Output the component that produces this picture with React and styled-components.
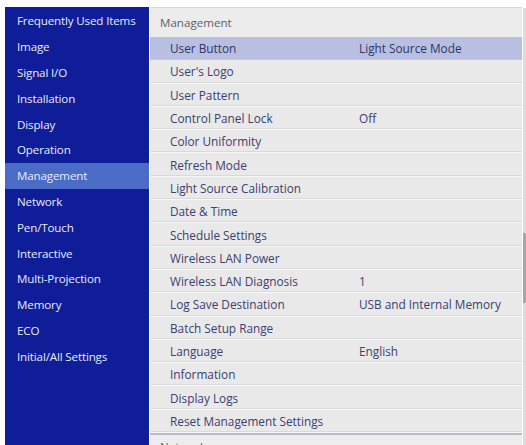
import React from 'react';
import styled, { createGlobalStyle } from 'styled-components';

// +++++++++ CSS +++++++++

const Global = createGlobalStyle`
	html, body {
		margin: 0;
		padding: 0;
		background: #ffffff;
	}
	body {
		font-family: "Open Sans", "Noto Sans", sans-serif;
		-webkit-font-smoothing: antialiased;
	}
`;

const Screen = styled.div`
	display: flex;
	width: 526px;
	height: 445px;
	padding: 7px 0 0 5px;
	box-sizing: border-box;
	overflow: hidden;
`;

const Sidebar = styled.ul`
	list-style: none;
	margin: 0;
	padding: 1px 0 0;
	width: 144px;
	flex: none;
	background: #0f1e98;
`;

const SideItem = styled.li`
	height: 25.8px;
	display: flex;
	align-items: center;
	padding-left: 12px;
	font-size: 11.6px;
	letter-spacing: -0.15px;
	color: ${p => (p.active ? '#e6ebf8' : '#e9eaf4')};
	background: ${p => (p.active ? '#4b6cc6' : 'transparent')};
`;

const Panel = styled.div`
	position: relative;
	margin-left: 1px;
	width: 372px;
	flex: none;
	background: #ebebeb;
	border-top: 1px solid #d6d6d6;
	display: flex;
	flex-direction: column;
`;

const Track = styled.div`
	position: absolute;
	top: 0;
	bottom: 0;
	right: -4px;
	width: 3px;
	background: #dcdcdc;
`;

const Thumb = styled.div`
	position: absolute;
	top: 225px;
	left: 0;
	width: 3px;
	height: 70px;
	background: #a6a6aa;
`;

const Heading = styled.div`
	flex: none;
	height: 29px;
	display: flex;
	align-items: center;
	padding-left: 10px;
	font-size: 11.6px;
	color: #5e5f6c;
	background: #ececec;
`;

const Row = styled.div`
	flex: none;
	display: grid;
	grid-template-columns: 189px 1fr;
	align-items: center;
	height: 23.3px;
	box-sizing: border-box;
	padding-left: 20px;
	font-size: 11.8px;
	color: ${p => (p.selected ? '#2e366c' : '#3b4070')};
	background: ${p => (p.selected ? '#b8bfe0' : '#e9e9e9')};
	border-bottom: 1px solid ${p => (p.selected ? '#c4c9e3' : '#f7f7f7')};
	box-shadow: inset 0 -2px 0 -1px ${p => (p.selected ? 'transparent' : '#d9d9d9')};
`;

const Value = styled.span`
	white-space: nowrap;
`;

const Divider = styled.div`
	flex: none;
	height: 2px;
	background: #b9b8cc;
`;

const NextHeading = styled.div`
	padding: 4px 0 0 10px;
	font-size: 11.6px;
	color: #5e5f6c;
	background: #ededed;
	flex: 1;
`;

// +++++++++ DATA +++++++++

const sections = [
	'Frequently Used Items',
	'Image',
	'Signal I/O',
	'Installation',
	'Display',
	'Operation',
	'Management',
	'Network',
	'Pen/Touch',
	'Interactive',
	'Multi-Projection',
	'Memory',
	'ECO',
	'Initial/All Settings',
];

const settings = [
	['User Button', 'Light Source Mode'],
	["User's Logo", ''],
	['User Pattern', ''],
	['Control Panel Lock', 'Off'],
	['Color Uniformity', ''],
	['Refresh Mode', ''],
	['Light Source Calibration', ''],
	['Date & Time', ''],
	['Schedule Settings', ''],
	['Wireless LAN Power', ''],
	['Wireless LAN Diagnosis', '1'],
	['Log Save Destination', 'USB and Internal Memory'],
	['Batch Setup Range', ''],
	['Language', 'English'],
	['Information', ''],
	['Display Logs', ''],
	['Reset Management Settings', ''],
];

// +++++++++ COMPONENT +++++++++

export default function App() {
	return (
		<>
			<Global />
			<Screen>
				<Sidebar>
					{sections.map(name => (
						<SideItem key={name} active={name === 'Management'}>
							{name}
						</SideItem>
					))}
				</Sidebar>
				<Panel>
					<Heading>Management</Heading>
					{settings.map(([label, value], i) => (
						<Row key={label} selected={i === 0}>
							<span>{label}</span>
							<Value>{value}</Value>
						</Row>
					))}
					<Divider />
					<NextHeading>Network</NextHeading>
					<Track>
						<Thumb />
					</Track>
				</Panel>
			</Screen>
		</>
	);
}
